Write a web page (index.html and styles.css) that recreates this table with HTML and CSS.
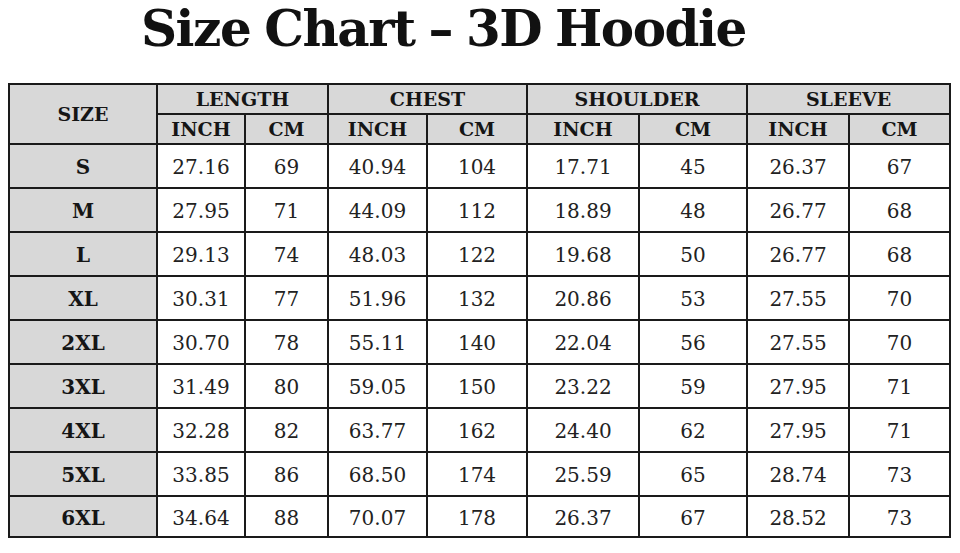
FILE: index.html
```html
<!DOCTYPE html>
<html>
<head>
<meta charset="utf-8">
<link rel="stylesheet" href="styles.css">
</head>
<body>
<div class="page">
  <h1 class="title">Size Chart – 3D Hoodie</h1>
  <table class="chart">
    <colgroup>
      <col class="c-size"><col class="c88"><col class="c83"><col class="c99"><col class="c100"><col class="c112"><col class="c108"><col class="c102"><col class="c101">
    </colgroup>
    <thead>
      <tr class="h1">
        <th rowspan="2" class="sz">SIZE</th>
        <th colspan="2">LENGTH</th>
        <th colspan="2">CHEST</th>
        <th colspan="2">SHOULDER</th>
        <th colspan="2">SLEEVE</th>
      </tr>
      <tr class="h2">
        <th>INCH</th><th>CM</th><th>INCH</th><th>CM</th><th>INCH</th><th>CM</th><th>INCH</th><th>CM</th>
      </tr>
    </thead>
    <tbody>
      <tr><th>S</th><td>27.16</td><td>69</td><td>40.94</td><td>104</td><td>17.71</td><td>45</td><td>26.37</td><td>67</td></tr>
      <tr><th>M</th><td>27.95</td><td>71</td><td>44.09</td><td>112</td><td>18.89</td><td>48</td><td>26.77</td><td>68</td></tr>
      <tr><th>L</th><td>29.13</td><td>74</td><td>48.03</td><td>122</td><td>19.68</td><td>50</td><td>26.77</td><td>68</td></tr>
      <tr><th>XL</th><td>30.31</td><td>77</td><td>51.96</td><td>132</td><td>20.86</td><td>53</td><td>27.55</td><td>70</td></tr>
      <tr><th>2XL</th><td>30.70</td><td>78</td><td>55.11</td><td>140</td><td>22.04</td><td>56</td><td>27.55</td><td>70</td></tr>
      <tr><th>3XL</th><td>31.49</td><td>80</td><td>59.05</td><td>150</td><td>23.22</td><td>59</td><td>27.95</td><td>71</td></tr>
      <tr><th>4XL</th><td>32.28</td><td>82</td><td>63.77</td><td>162</td><td>24.40</td><td>62</td><td>27.95</td><td>71</td></tr>
      <tr><th>5XL</th><td>33.85</td><td>86</td><td>68.50</td><td>174</td><td>25.59</td><td>65</td><td>28.74</td><td>73</td></tr>
      <tr class="last"><th>6XL</th><td>34.64</td><td>88</td><td>70.07</td><td>178</td><td>26.37</td><td>67</td><td>28.52</td><td>73</td></tr>
    </tbody>
  </table>
</div>
</body>
</html>
```
FILE: styles.css
```css
html, body {
  margin: 0;
  padding: 0;
  background: #ffffff;
}
.page {
  width: 960px;
  height: 553px;
  padding: 0 0 0 8px;
  box-sizing: border-box;
  font-family: "DejaVu Serif", "Liberation Serif", serif;
  color: #1e1e1e;
}
.title {
  margin: 0;
  height: 83px;
  padding-left: 133px;
  font-family: "DejaVu Serif", "Liberation Serif", serif;
  font-weight: bold;
  font-size: 50px;
  line-height: 58px;
  color: #111;
  letter-spacing: -1.5px;
  word-spacing: -2px;
}
.chart {
  border-collapse: collapse;
  table-layout: fixed;
  width: 943px;
  border: 2px solid #1a1a1a;
}
.c-size { width: 148px; }
.c88 { width: 88px; }
.c83 { width: 83px; }
.c99 { width: 99px; }
.c100 { width: 100px; }
.c112 { width: 112px; }
.c108 { width: 108px; }
.c102 { width: 102px; }
.c101 { width: 101px; }
.chart th, .chart td {
  border: 2px solid #1a1a1a;
  text-align: center;
  padding: 0;
}
.chart thead th {
  background: #d8d8d8;
  font-weight: bold;
  font-size: 19px;
  height: 28px;
  line-height: 28px;
  color: #151515;
}
.chart tbody th {
  background: #d8d8d8;
  font-weight: bold;
  font-size: 20px;
  color: #151515;
}
.chart tbody th, .chart tbody td {
  height: 40px;
  padding-top: 2px;
}
.chart tbody td {
  font-size: 20px;
  color: #222;
}
.chart tbody tr.last th, .chart tbody tr.last td {
  height: 37px;
}
```
